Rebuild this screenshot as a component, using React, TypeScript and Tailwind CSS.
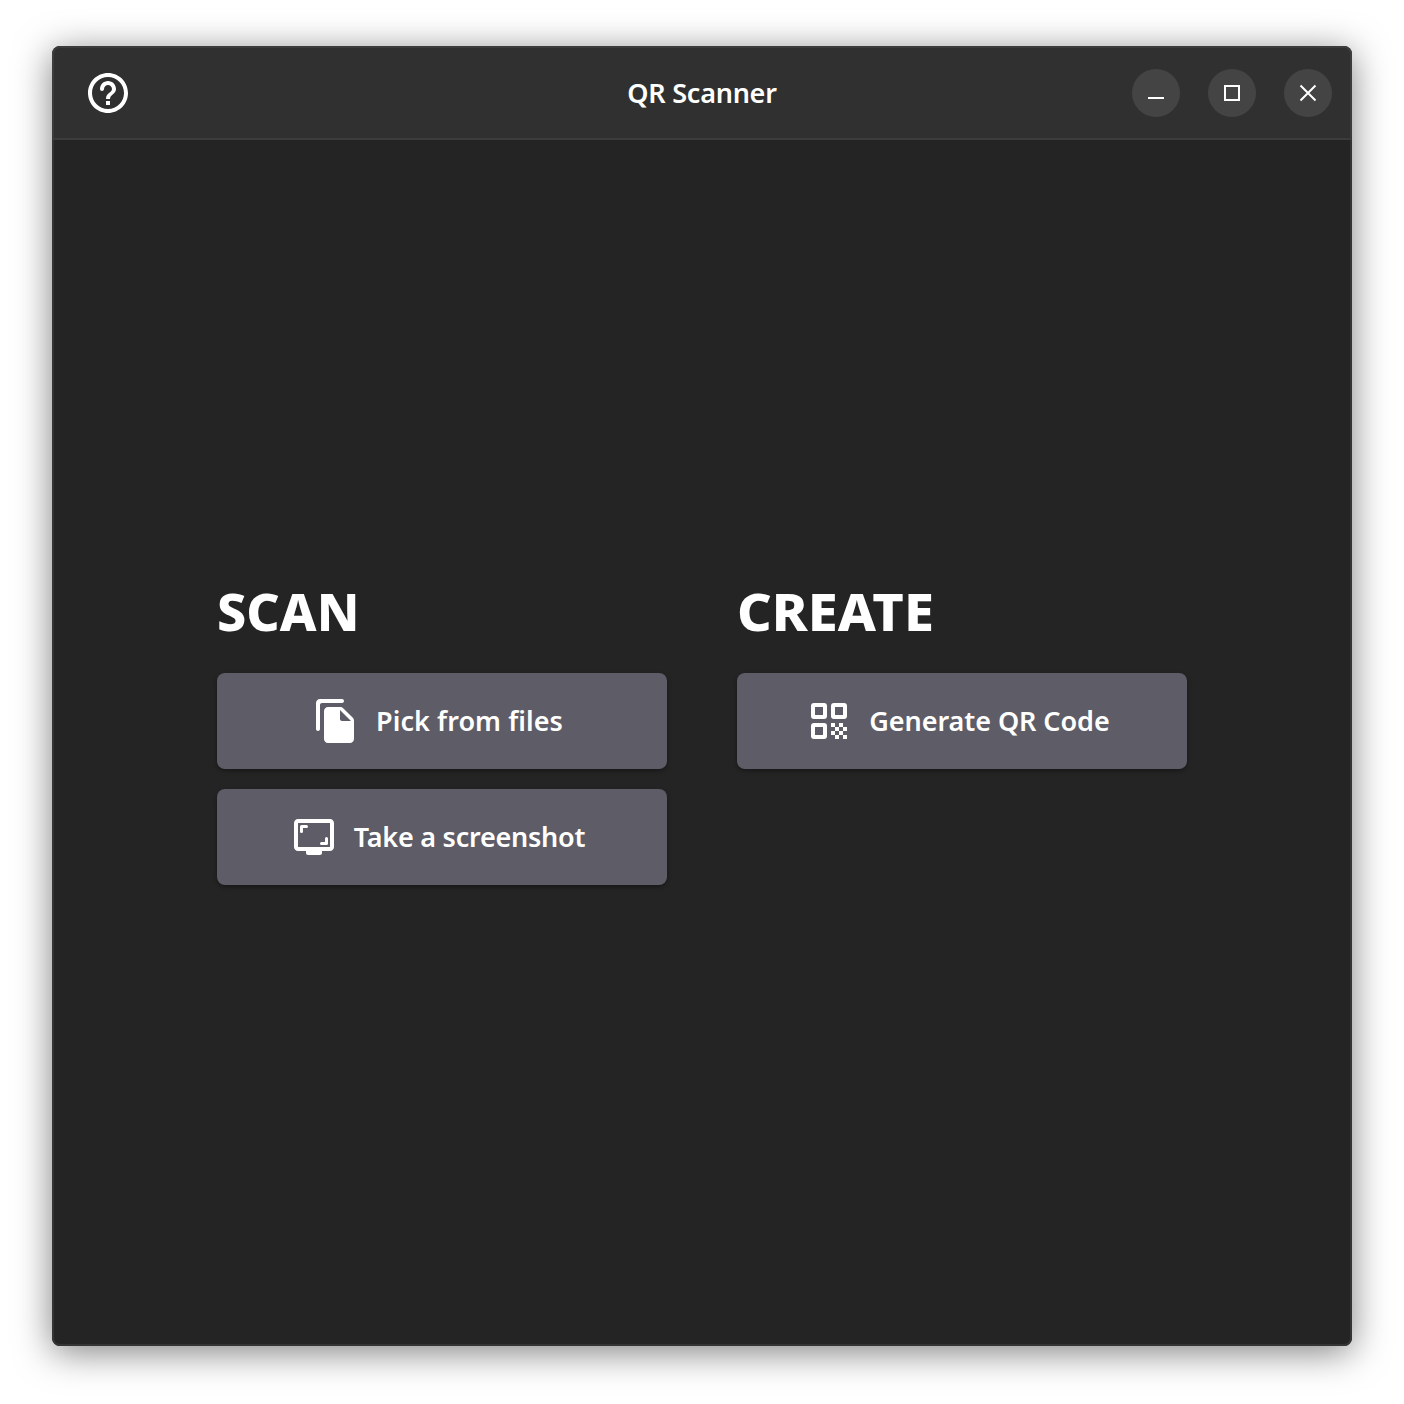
import React from "react";

function HelpIcon() {
  return (
    <svg viewBox="0 0 24 24" className="size-12 shrink-0" fill="currentColor">
      <path d="M11 18h2v-2h-2v2zm1-16C6.48 2 2 6.48 2 12s4.48 10 10 10 10-4.48 10-10S17.52 2 12 2zm0 18c-4.41 0-8-3.59-8-8s3.59-8 8-8 8 3.59 8 8-3.59 8-8 8zm0-14c-2.21 0-4 1.79-4 4 0 .55.45 1 1 1s1-.45 1-1c0-1.1.9-2 2-2s2 .9 2 2c0 2-3 1.75-3 5h2c0-2.25 3-2.5 3-5 0-2.21-1.79-4-4-4z" />
    </svg>
  );
}

function FilesIcon() {
  return (
    <svg viewBox="0 0 24 24" className="size-12 shrink-0" fill="currentColor">
      <path d="M15 1H4c-1.1 0-2 .9-2 2v13c0 .55.45 1 1 1s1-.45 1-1V4c0-.55.45-1 1-1h10c.55 0 1-.45 1-1s-.45-1-1-1zm.59 4.59l4.83 4.83c.37.37.58.88.58 1.41V21c0 1.1-.9 2-2 2H7.99C6.89 23 6 22.1 6 21l.01-14c0-1.1.89-2 1.99-2h6.17c.53 0 1.04.21 1.42.59zM15 12h4.5L14 6.5V11c0 .55.45 1 1 1z" />
    </svg>
  );
}

function ScreenshotIcon() {
  return (
    <svg viewBox="0 0 24 24" className="size-12 shrink-0" fill="currentColor">
      <path d="M20 3H4c-1.1 0-2 .9-2 2v12c0 1.1.9 2 2 2h4v1c0 .55.45 1 1 1h6c.55 0 1-.45 1-1v-1h4c1.1 0 2-.9 2-2V5c0-1.1-.9-2-2-2zm0 14H4V5h16v12z" />
      <path
        d="M5.750 9.250V6.750H8.250M18.250 12.750V15.250H15.750"
        fill="none"
        stroke="currentColor"
        strokeWidth="1.5"
        strokeLinecap="round"
        strokeLinejoin="round"
      />
    </svg>
  );
}

function QrIcon() {
  return (
    <svg viewBox="0 0 24 24" className="size-12 shrink-0" fill="currentColor" fillRule="evenodd">
      <path d="M4.500 3h5A1.500 1.500 0 0 1 11 4.500v5A1.500 1.500 0 0 1 9.500 11h-5A1.500 1.500 0 0 1 3 9.500v-5A1.500 1.500 0 0 1 4.500 3zM5 5v4h4V5z" />
      <path d="M14.500 3h5A1.500 1.500 0 0 1 21 4.500v5a1.500 1.500 0 0 1-1.500 1.500h-5A1.500 1.500 0 0 1 13 9.500v-5A1.500 1.500 0 0 1 14.500 3zM15 5v4h4V5z" />
      <path d="M4.500 13h5a1.500 1.500 0 0 1 1.500 1.500v5A1.500 1.500 0 0 1 9.500 21h-5A1.500 1.500 0 0 1 3 19.500v-5A1.500 1.500 0 0 1 4.500 13zM5 15v4h4v-4z" />
      <path d="M13 13h2v2h-2zM17 13h2v2h-2zM15 15h2v2h-2zM19 15h2v2h-2zM13 17h2v2h-2zM17 17h2v2h-2zM15 19h2v2h-2zM19 19h2v2h-2z" />
    </svg>
  );
}

function WindowButton({ label, d }: { label: string; d: string }) {
  return (
    <button aria-label={label} className="size-12 rounded-full bg-[#444444]">
      <svg viewBox="0 0 48 48" className="size-12" fill="none" stroke="white" strokeWidth="2">
        <path d={d} />
      </svg>
    </button>
  );
}

function ActionButton({ icon, children }: { icon: React.ReactNode; children: React.ReactNode }) {
  return (
    <button className="flex h-24 w-[450px] items-center justify-center gap-4 rounded-lg bg-[#5e5c66] pr-[9px] text-[27px] leading-9 font-semibold shadow-[0_2px_4px_rgba(0,0,0,0.35)]">
      {icon}
      {children}
    </button>
  );
}

export default function App() {
  return (
    <div className="h-[1404px] w-[1404px] bg-white px-[52px] pt-[46px] font-['Noto_Sans',sans-serif] text-white">
      <div className="flex h-[1300px] flex-col rounded-lg bg-[#242424] shadow-[0_6px_36px_rgba(0,0,0,0.5)]">
        <header className="grid h-[94px] shrink-0 grid-cols-[200px_1fr_200px] items-center rounded-t-lg border-2 border-[#3c3c3c] bg-[#303030] pr-[18px] pl-[30px]">
          <HelpIcon />
          <h1 className="-ml-3 text-center text-[27px] leading-9 font-semibold tracking-[-0.250px]">QR Scanner</h1>
          <div className="flex justify-end gap-7">
            <WindowButton label="Minimize" d="M16 29H32" />
            <WindowButton label="Maximize" d="M17 17H31V31H17Z" />
            <WindowButton label="Close" d="M16.500 16.500L31.500 31.500M31.500 16.500L16.500 31.500" />
          </div>
        </header>
        <main className="flex grow justify-center gap-[70px] rounded-b-lg border-x-2 border-b-2 border-[#343434] pt-[437px]">
          <section className="flex flex-col gap-5">
            <h2 className="h-[76px] origin-left scale-x-[1.02] text-[51px] leading-[68px] font-extrabold">SCAN</h2>
            <ActionButton icon={<FilesIcon />}>
              <span className="tracking-[0.060px]">Pick from files</span>
            </ActionButton>
            <ActionButton icon={<ScreenshotIcon />}>
              <span className="tracking-[-0.240px]">Take a screenshot</span>
            </ActionButton>
          </section>
          <section className="flex flex-col gap-5">
            <h2 className="h-[76px] origin-left scale-x-[1.06] text-[51px] leading-[68px] font-extrabold">CREATE</h2>
            <ActionButton icon={<QrIcon />}>
              <span className="tracking-[-0.060px]">Generate QR Code</span>
            </ActionButton>
          </section>
        </main>
      </div>
    </div>
  );
}
